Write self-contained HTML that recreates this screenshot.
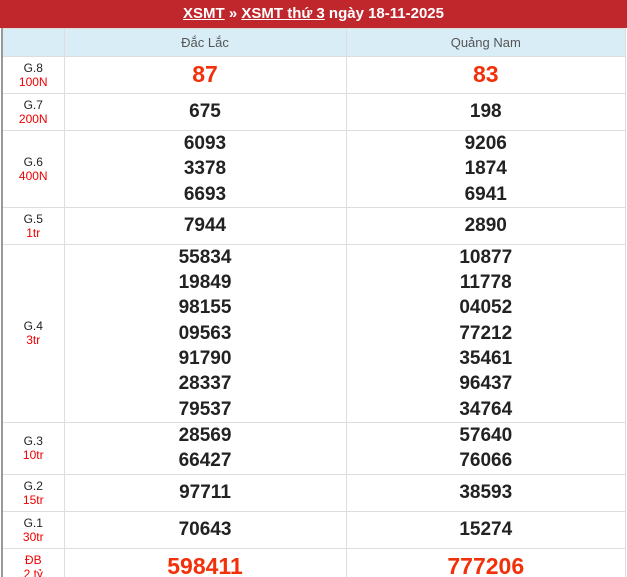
<!DOCTYPE html>
<html><head><meta charset="utf-8"><style>
body{margin:0;background:#fff;font-family:"Liberation Sans",Arial,sans-serif;}
.wrap{width:627px;height:577px;overflow:hidden;position:relative}
.top{height:28px;background:#c0272d;color:#fff;font-weight:bold;font-size:15px;text-align:center;line-height:28px;}
.top a{color:#fff;text-decoration:underline}
table{border-collapse:collapse;width:625px;margin-left:1px;table-layout:fixed;border-left:2px solid #999}
td{border:1px solid #ddd;text-align:center;padding:0}
th{background:#d9edf7;color:#555;font-weight:normal;font-size:13px;height:27px;padding:0;border:1px solid #ddd}
.g{font-size:12px;color:#222;line-height:14px}
.g span{color:#e00;display:block}
.n{font-weight:bold;font-size:19px;color:#222;line-height:25.3px}
.r{color:#f2300a;font-size:23px}
</style></head><body><div class="wrap">
<div class="top"><a>XSMT</a> » <a>XSMT thứ 3</a> ngày 18-11-2025</div>
<table>
<colgroup><col style="width:62px"><col style="width:282px"><col></colgroup>
<tr><th></th><th>Đắc Lắc</th><th>Quảng Nam</th></tr>
<tr style="height:37px"><td class="g">G.8<span>100N</span></td><td class="n r">87</td><td class="n r">83</td></tr>
<tr style="height:37px"><td class="g">G.7<span>200N</span></td><td class="n">675</td><td class="n">198</td></tr>
<tr style="height:76px"><td class="g">G.6<span>400N</span></td><td class="n">6093<br>3378<br>6693</td><td class="n">9206<br>1874<br>6941</td></tr>
<tr style="height:37px"><td class="g">G.5<span>1tr</span></td><td class="n">7944</td><td class="n">2890</td></tr>
<tr style="height:177px"><td class="g">G.4<span>3tr</span></td><td class="n">55834<br>19849<br>98155<br>09563<br>91790<br>28337<br>79537</td><td class="n">10877<br>11778<br>04052<br>77212<br>35461<br>96437<br>34764</td></tr>
<tr style="height:52px"><td class="g">G.3<span>10tr</span></td><td class="n">28569<br>66427</td><td class="n">57640<br>76066</td></tr>
<tr style="height:37px"><td class="g">G.2<span>15tr</span></td><td class="n">97711</td><td class="n">38593</td></tr>
<tr style="height:37px"><td class="g">G.1<span>30tr</span></td><td class="n">70643</td><td class="n">15274</td></tr>
<tr style="height:37px"><td class="g" style="color:#e00">ĐB<span>2 tỷ</span></td><td class="n r">598411</td><td class="n r">777206</td></tr>
</table></div></body></html>
